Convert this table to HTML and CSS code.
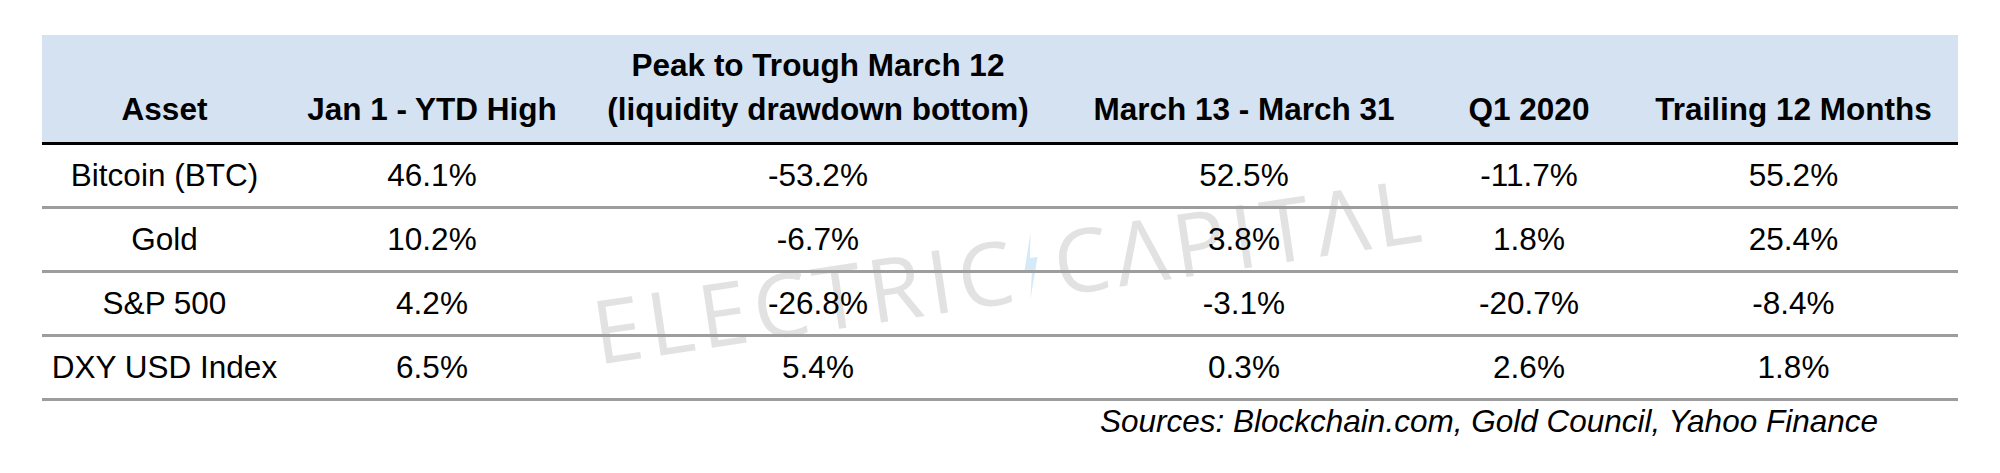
FILE: index.html
```html
<!DOCTYPE html>
<html lang="en">
<head>
<meta charset="utf-8">
<title>Asset returns</title>
<link rel="stylesheet" href="styles.css">
</head>
<body>
<div class="wrap">
  <div class="watermark" aria-hidden="true">
    <span>ELECTRIC</span><svg class="bolt" viewBox="0 0 20 60" width="22" height="74"><polygon points="14,0 3,35 10,35 5,60 17,23 10,23" fill="#d5eaf8"/></svg><span>CΛPITΛL</span>
  </div>
  <table class="returns">
    <colgroup>
      <col class="c1"><col class="c2"><col class="c3"><col class="c4"><col class="c5"><col class="c6">
    </colgroup>
    <thead>
      <tr>
        <th>Asset</th>
        <th>Jan 1 - YTD High</th>
        <th>Peak to Trough March 12<br>(liquidity drawdown bottom)</th>
        <th>March 13 - March 31</th>
        <th>Q1 2020</th>
        <th>Trailing 12 Months</th>
      </tr>
    </thead>
    <tbody>
      <tr><td>Bitcoin (BTC)</td><td>46.1%</td><td>-53.2%</td><td>52.5%</td><td>-11.7%</td><td>55.2%</td></tr>
      <tr><td>Gold</td><td>10.2%</td><td>-6.7%</td><td>3.8%</td><td>1.8%</td><td>25.4%</td></tr>
      <tr><td>S&amp;P 500</td><td>4.2%</td><td>-26.8%</td><td>-3.1%</td><td>-20.7%</td><td>-8.4%</td></tr>
      <tr><td>DXY USD Index</td><td>6.5%</td><td>5.4%</td><td>0.3%</td><td>2.6%</td><td>1.8%</td></tr>
    </tbody>
  </table>
  <p class="sources">Sources: Blockchain.com, Gold Council, Yahoo Finance</p>
</div>
</body>
</html>
```
FILE: styles.css
```css
html, body {
  margin: 0;
  padding: 0;
  background: #ffffff;
}

body {
  font-family: "Liberation Sans", Arial, sans-serif;
  color: #000;
}

.wrap {
  position: relative;
  width: 1916px;
  margin: 35px 0 0 42px;
}

.returns {
  position: relative;
  z-index: 1;
  width: 1916px;
  border-collapse: collapse;
  table-layout: fixed;
  font-size: 31.5px;
}

.c1 { width: 245px; }
.c2 { width: 290px; }
.c3 { width: 482px; }
.c4 { width: 370px; }
.c5 { width: 200px; }
.c6 { width: 329px; }

.returns thead tr {
  background: #d5e2f1;
}

.returns th {
  height: 108px;
  padding: 0 0 11px;
  box-sizing: border-box;
  vertical-align: bottom;
  text-align: center;
  font-weight: bold;
  line-height: 44px;
  white-space: nowrap;
  border-bottom: 3px solid #000;
}

.returns td {
  height: 61px;
  padding: 0;
  text-align: center;
  vertical-align: middle;
  line-height: 36px;
  white-space: nowrap;
  border-bottom: 3px solid #9d9d9d;
}

.sources {
  margin: 0;
  padding-right: 80px;
  text-align: right;
  font-style: italic;
  font-size: 31.5px;
  line-height: 40px;
}

.watermark {
  position: absolute;
  z-index: 0;
  left: 967px;
  top: 234px;
  transform: translate(-50%, -50%) rotate(-8.5deg);
  display: flex;
  align-items: center;
  white-space: nowrap;
  font-family: "Open Sans", "DejaVu Sans", sans-serif;
  font-weight: 400;
  font-size: 88px;
  line-height: 1;
  letter-spacing: 6px;
  color: #e2e2e2;
}

.bolt {
  margin: 0 12px 0 2px;
}
```
